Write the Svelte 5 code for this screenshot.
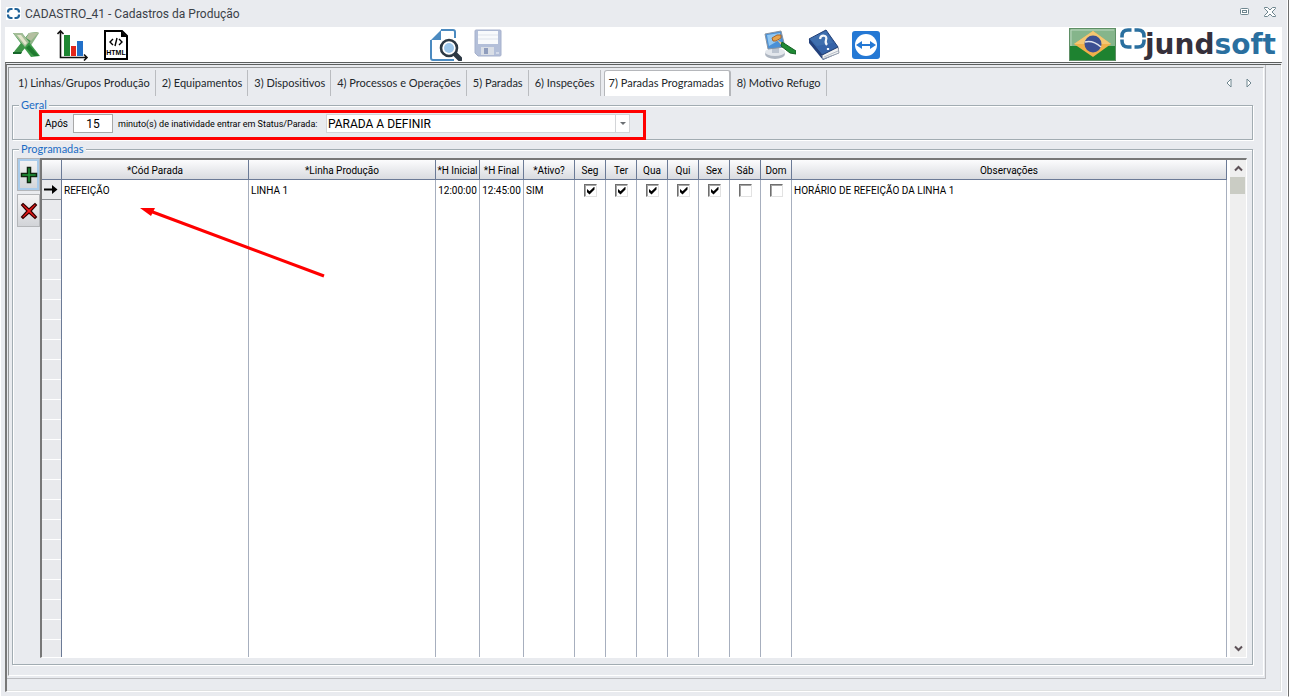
<script lang="ts">
  const tabs = [
    '1) Linhas/Grupos Produção',
    '2) Equipamentos',
    '3) Dispositivos',
    '4) Processos e Operações',
    '5) Paradas',
    '6) Inspeções',
    '7) Paradas Programadas',
    '8) Motivo Refugo'
  ];
  const days = ['Seg', 'Ter', 'Qua', 'Qui', 'Sex', 'Sáb', 'Dom'];

  let activeTab = $state(6);
  let minutes = $state('15');
  let status = $state('PARADA A DEFINIR');

  let rows = $state([
    {
      stop: 'REFEIÇÃO',
      line: 'LINHA 1',
      start: '12:00:00',
      end: '12:45:00',
      active: 'SIM',
      days: [true, true, true, true, true, false, false],
      notes: 'HORÁRIO DE REFEIÇÃO DA LINHA 1'
    }
  ]);
</script>

<div class="window">
  <header class="titlebar">
    <svg class="app-icon" width="15" height="13" viewBox="0 0 15 13">
      <rect width="15" height="13" fill="#fff" />
      <path d="M6.500 2H5Q2 2 2 5v.5M8.500 2H10q3 0 3 3v.5M6.500 11H5Q2 11 2 8v-.5M8.500 11H10q3 0 3-3v-.5" fill="none" stroke="#1f6298" stroke-width="2.200" />
    </svg>
    <h1>CADASTRO_41 - Cadastros da Produção</h1>
    <button class="win-btn" aria-label="Restaurar">
      <svg width="10" height="8" viewBox="0 0 10 8" fill="#fff" stroke="#6f868f">
        <rect x=".5" y=".5" width="8" height="6" rx="1" />
        <rect x="2.500" y="2.500" width="4" height="2" />
      </svg>
    </button>
    <button class="win-btn" aria-label="Fechar">
      <svg width="12" height="10" viewBox="0 0 12 10" fill="#fff" stroke="#6f868f">
        <path d="M.5.5h3L6 3 8.500.5h3v1L8 5l3.500 3.500v1h-3L6 7 3.500 9.500h-3v-1L4 5 .5 1.500z" />
      </svg>
    </button>
  </header>

  <div class="toolbar">
    <div class="tools">
      <button class="tool" aria-label="Exportar para Excel">
        <svg width="30" height="28" viewBox="0 0 30 28">
          <path d="M16 12 21 2h6L18 16z" fill="#8db487" />
          <path d="M1 22 17 2l9-1L9 22z" fill="#3f9448" />
          <path d="M17 2l10-1-8 9-5-3z" fill="#b4bfa0" />
          <path d="M1 2h9l18 23-9 1z" fill="#3c9b49" />
          <path d="M1 2h9l7 9-4 5z" fill="#a4bd98" />
          <path d="M5 4h4l6 8-2 2z" fill="#e4e6cc" />
          <path d="M14 17l8 8h5L17 14z" fill="#1f7a2f" />
          <path d="M1 21h9l-1 2H1z" fill="#17672a" />
        </svg>
      </button>
      <button class="tool" aria-label="Gráfico">
        <svg width="32" height="32" viewBox="0 0 32 32">
          <rect x="7" y="6" width="6" height="21" fill="#1e8733" />
          <rect x="14" y="17" width="5" height="10" fill="#e3261b" />
          <rect x="20" y="12" width="6" height="15" fill="#2170c9" />
          <path d="M3.500 2v26.500H29M.5 5l3-3 3 3M27 25.500l3 3-3 3" fill="none" stroke="#111" stroke-width="1.600" />
        </svg>
      </button>
      <button class="tool" aria-label="Exportar HTML">
        <svg width="24" height="30" viewBox="0 0 24 30">
          <path d="M1 1h17l5 5v23H1z" fill="#fff" stroke="#000" stroke-width="2" />
          <path d="M17 1v6h6z" />
          <path d="M9 9l-3 3 3 3M15 9l3 3-3 3M13 8l-2 8" fill="none" stroke="#000" stroke-width="1.400" />
          <text x="12" y="25" text-anchor="middle" class="html-label">HTML</text>
        </svg>
      </button>
    </div>

    <div class="tools tools-record">
      <button class="tool" aria-label="Visualizar">
        <svg width="32" height="32" viewBox="0 0 32 32">
          <path d="M1 11 11 1v10z" fill="#4b8ac0" />
          <path d="M11 1h12q2 0 2 2v6M1 11v18q0 2 2 2h21" fill="none" stroke="#4b8ac0" stroke-width="2" />
          <path d="M25 25l5 5" stroke="#2d3944" stroke-width="5" stroke-linecap="round" />
          <circle cx="19" cy="19" r="8" fill="#fff" stroke="#2d3944" stroke-width="2.600" />
          <circle cx="19" cy="19" r="5" fill="#9cc6ea" />
        </svg>
      </button>
      <button class="tool save" aria-label="Salvar" disabled>
        <svg width="28" height="28" viewBox="0 0 28 28">
          <path d="M1 2q0-1 1-1h24q1 0 1 1v24q0 1-1 1H4l-3-3z" fill="#b3bfd9" stroke="#a6b1cc" />
          <path d="M4 2h20v13H4z" fill="#f8fafc" />
          <path d="M4 6h20M4 10h20" stroke="#dfe4ec" />
          <path d="M7 18h13v8H7z" fill="#d9dee6" />
          <path d="M10 19h4v6h-4z" fill="#8f9dbd" />
          <path d="M22 24h3" stroke="#f2f4f8" />
        </svg>
      </button>
    </div>

    <div class="tools tools-help">
      <button class="tool" aria-label="Aparência">
        <svg width="32" height="30" viewBox="0 0 32 30">
          <ellipse cx="11" cy="24" rx="10" ry="5" fill="#aeb6c1" />
          <ellipse cx="11" cy="22" rx="10" ry="4" fill="#e3e7ec" />
          <path d="M8 17h7v6H8z" fill="#bdc5d0" />
          <path d="M1 4 17 1l4 16-17 2z" fill="#4a90d6" stroke="#8794a3" />
          <path d="M3 5 16 3l1 6-12 7z" fill="#91c7f2" />
          <path d="M8 8l5-3h4v3l-5 3H9z" fill="#e8a34b" stroke="#a6652a" />
          <path d="M13 10l6 3-1 3z" fill="#e4c28a" />
          <path d="M18 12l14 9v3l-6-1-9-7z" fill="#1f8a34" stroke="#146024" />
        </svg>
      </button>
      <button class="tool" aria-label="Ajuda">
        <svg width="32" height="32" viewBox="0 0 32 32">
          <path d="M1 10v4l14 17 16-7v-5z" fill="#22407c" />
          <path d="M14 26l16-8 1 6-16 6z" fill="#f2f3f4" stroke="#9aa3b0" />
          <path d="M16 28l14-6" stroke="#b5bcc6" />
          <path d="M1 10 18 1l12 17-16 8z" fill="#3563a8" stroke="#223f75" />
          <path d="M2 10 18 2l7 12-16 3z" fill="#3f6fae" />
          <path d="M12 10c1-5 8-4 6 1-1 3 0 4 1 5M20 19v2" fill="none" stroke="#f4f7fa" stroke-width="2.200" />
        </svg>
      </button>
      <button class="tool" aria-label="Suporte remoto">
        <svg width="28" height="28" viewBox="0 0 28 28">
          <rect width="28" height="28" rx="3" fill="#2478d4" />
          <circle cx="14" cy="14" r="11" fill="#fff" />
          <path d="M4 14l6-4v3h8v-3l6 4-6 4v-3h-8v3z" fill="#2478d4" />
        </svg>
      </button>
    </div>

    <div class="brand">
      <svg width="47" height="33" viewBox="0 0 47 33">
        <rect x=".5" y=".5" width="46" height="32" fill="#1e8230" stroke="#5f8f66" />
        <rect x="1" y="1" width="45" height="17" fill="#85b58b" />
        <path d="M2 18v-16h43" fill="none" stroke="#bcd8bf" />
        <path d="M5 16 24 3l18 13-18 13z" fill="#f0b04a" />
        <path d="M5 16 24 3l18 13z" fill="#f4c672" />
        <circle cx="24" cy="16" r="8.500" fill="#3c4f92" />
        <path d="M16 14q8-2 16 5" fill="none" stroke="#dfe3ee" stroke-width="1.600" />
      </svg>
      <svg class="mark" width="26" height="21" viewBox="0 0 26 21">
        <path d="M11.500 2H8Q2 2 2 8v1.500M14.500 2H18q6 0 6 6v1.500M11.500 19H8q-6 0-6-6v-1.500M14.500 19H18q6 0 6-6v-1.500" fill="none" stroke="#2a6f9f" stroke-width="3.600" />
      </svg>
      <span class="wordmark">jund<b>soft</b></span>
    </div>
  </div>

  <main class="pane">
    <div class="page">
      <div class="sheet">
        <nav class="tabs" role="tablist">
          {#each tabs as tab, i}
            <button role="tab" class="tab" class:active={activeTab === i} aria-selected={activeTab === i} onclick={() => (activeTab = i)}>{tab}</button>
          {/each}
          <div class="tab-scroll">
            <button aria-label="Abas anteriores">
              <svg width="6" height="10" viewBox="0 0 6 10"><path d="M5 1v8L1 5z" fill="#fff" stroke="#6f868f" /></svg>
            </button>
            <button aria-label="Próximas abas">
              <svg width="6" height="10" viewBox="0 0 6 10"><path d="M1 1v8l4-4z" fill="#fff" stroke="#6f868f" /></svg>
            </button>
          </div>
        </nav>

        <fieldset class="general">
          <legend>Geral</legend>
          <div class="idle">
            <label for="minutes">Após</label>
            <input id="minutes" type="text" bind:value={minutes} />
            <label for="status" class="small">minuto(s) de inatividade entrar em Status/Parada:</label>
            <div class="combo">
              <select id="status" bind:value={status}>
                <option>PARADA A DEFINIR</option>
              </select>
              <span class="combo-arrow"></span>
            </div>
          </div>
        </fieldset>

        <fieldset class="scheduled">
          <legend>Programadas</legend>
          <div class="row-actions">
            <button class="focused" aria-label="Adicionar">
              <svg width="18" height="18" viewBox="0 0 18 18"><path d="M7.500 1.500h3v6h6v3h-6v6h-3v-6h-6v-3h6z" fill="#1f9a3a" stroke="#10240f" stroke-width="1.500" /></svg>
            </button>
            <button aria-label="Excluir">
              <svg width="18" height="18" viewBox="0 0 18 18"><path d="M3 1.500l6 5.500 6-5.500 1.500 1.500L11 9l5.500 6-1.500 1.500L9 11l-6 5.500L1.500 15 7 9 1.500 3z" fill="#f01818" stroke="#300" stroke-width="1.200" /></svg>
            </button>
          </div>

          <div class="grid">
            <table>
              <colgroup>
                <col class="c-mark" />
                <col class="c-name" />
                <col class="c-name" />
                <col class="c-time" />
                <col class="c-time" />
                <col class="c-active" />
                {#each days as day}
                  <col class="c-day" />
                {/each}
                <col />
              </colgroup>
              <thead>
                <tr>
                  <th></th>
                  <th>*Cód Parada</th>
                  <th>*Linha Produção</th>
                  <th>*H Inicial</th>
                  <th>*H Final</th>
                  <th>*Ativo?</th>
                  {#each days as day}
                    <th>{day}</th>
                  {/each}
                  <th>Observações</th>
                </tr>
              </thead>
              <tbody>
                {#each rows as row}
                  <tr>
                    <td class="mark-cell">
                      <svg width="14" height="9" viewBox="0 0 14 9"><path d="M0 3.500h8V0l5.500 4.500L8 9V5.500H0z" /></svg>
                    </td>
                    <td>{row.stop}</td>
                    <td>{row.line}</td>
                    <td class="center">{row.start}</td>
                    <td class="center">{row.end}</td>
                    <td>{row.active}</td>
                    {#each days as day, d}
                      <td class="center"><input type="checkbox" aria-label={day} bind:checked={row.days[d]} /></td>
                    {/each}
                    <td>{row.notes}</td>
                  </tr>
                {/each}
                <tr class="filler">
                  <td class="blank-marks"></td>
                  {#each Array(13) as _}
                    <td></td>
                  {/each}
                </tr>
              </tbody>
            </table>
            <div class="scrollbar">
              <button aria-label="Rolar para cima">
                <svg width="9" height="7" viewBox="0 0 9 7"><path d="M1 5.500 4.500 2 8 5.500" /></svg>
              </button>
              <div class="thumb"></div>
              <button class="down" aria-label="Rolar para baixo">
                <svg width="9" height="7" viewBox="0 0 9 7"><path d="M1 1.500 4.500 5 8 1.500" /></svg>
              </button>
            </div>
            <svg class="pointer" width="186" height="72" viewBox="0 0 186 72">
              <path d="M10 4 184 69" stroke="#f00" stroke-width="3" />
              <path d="M0 1l15 0-4 8z" fill="#f00" />
            </svg>
          </div>
        </fieldset>
      </div>
    </div>
  </main>
</div>

<style>
  :global(body) {
    margin: 0;
  }

  .window {
    box-sizing: border-box;
    display: flex;
    flex-direction: column;
    height: 100vh;
    padding: 0 6px 4px 4px;
    background: #e9ebef;
    border-left: 1px solid #fff;
    border-right: 1px solid #6d6d6d;
    border-bottom: 1px solid #fff;
    box-shadow: inset -1px 0 0 #fff;
    font-family: Roboto, sans-serif;
    font-size: 10px;
    color: #000;
  }

  button {
    padding: 0;
    border: none;
    background: none;
    font: inherit;
    color: inherit;
  }

  svg {
    display: block;
    flex: none;
  }

  .titlebar {
    display: flex;
    align-items: center;
    height: 27px;
    padding: 0 6px 0 1px;
    gap: 14px;
  }

  .titlebar h1 {
    flex: 1;
    margin: 0 0 0 -10px;
    font: 12px Roboto, sans-serif;
    color: #3b4148;
  }

  .win-btn {
    margin-bottom: 3px;
  }

  .toolbar {
    display: flex;
    align-items: center;
    height: 35px;
    padding: 0 6px 0 7px;
    background: #fff;
  }

  .tools {
    display: flex;
    align-items: center;
    gap: 15px;
  }

  .tools-record {
    gap: 12px;
    margin-left: 302px;
  }

  .save {
    margin-bottom: 3px;
  }

  .tools-help {
    gap: 12px;
    margin-left: 262px;
  }

  .html-label {
    font: bold 7px 'Liberation Sans', sans-serif;
  }

  .brand {
    display: flex;
    align-items: center;
    margin-left: auto;
  }

  .mark {
    margin: 0 0 12px 4px;
  }

  .wordmark {
    margin-left: -1px;
    font: bold 28px/33px 'DejaVu Sans', sans-serif;
    color: #35303b;
  }

  .wordmark b {
    color: #2a6f9f;
  }

  .pane {
    flex: 1;
    display: flex;
    min-height: 0;
    border-top: 3px double #5c5f5e;
    border-left: 2px solid #777;
    border-right: 1px solid #fff;
    border-bottom: 1px solid #fff;
    box-shadow: inset -1px -1px 0 #dfe1e1;
  }

  .page {
    flex: 1;
    display: flex;
    margin: 0 15px 12px 0;
    padding: 2px 1px 2px 1px;
    border-right: 1px solid #bcbdc1;
    border-bottom: 1px solid #bcbdc1;
  }

  .sheet {
    flex: 1;
    display: flex;
    flex-direction: column;
    padding: 2px 10px 10px 3px;
    border: 1px solid #969899;
    border-right-color: #fff;
    border-bottom-color: #fff;
  }

  .tabs {
    display: flex;
    height: 26px;
    font: 11px Lato, sans-serif;
    color: #22272b;
  }

  .tab {
    padding: 0 5px 2px 6px;
    border-right: 1px solid #babcc0;
    white-space: nowrap;
  }

  .tab.active {
    margin-left: 3px;
    padding: 0 5px 2px 4px;
    background: #fff;
    border: 1px solid #b5b7bb;
    border-right-width: 2px;
    border-bottom: none;
    border-radius: 3px 3px 0 0;
  }

  .tab-scroll {
    display: flex;
    gap: 14px;
    margin-left: auto;
    padding-right: 1px;
  }

  fieldset {
    position: relative;
    min-width: 0;
    margin: 0;
    padding: 0;
    border: 1px solid #a2acb2;
    box-shadow: 1px 1px 0 #fff, inset 1px 1px 0 #fff;
  }

  /* Sits on the frame line */
  legend {
    position: absolute;
    top: -9px;
    left: 6px;
    padding: 0 2px;
    background: #e9ebef;
    font: 11px/15px Lato, sans-serif;
    color: #1b6bc4;
  }

  .general {
    margin-top: 9px;
    padding: 4px 0 0 26px;
  }

  .idle {
    position: relative;
    box-sizing: border-box;
    display: flex;
    align-items: center;
    width: 607px;
    height: 30px;
    margin-bottom: -1px;
    padding: 0 0 3px 3px;
    border: 3px solid #f00;
  }

  .idle label {
    white-space: nowrap;
  }

  .idle .small {
    font-size: 9px;
  }

  .idle input {
    box-sizing: border-box;
    width: 40px;
    height: 19px;
    margin: 0 5px;
    padding: 0;
    border: 1px solid #a8a8a8;
    background: #fff;
    font: 12px Roboto, sans-serif;
    text-align: center;
  }

  .combo {
    position: relative;
    flex: none;
    width: 304px;
    margin-left: auto;
    margin-right: 13px;
  }

  .combo select {
    display: block;
    width: 100%;
    height: 19px;
    padding: 0 16px 0 1px;
    appearance: none;
    border: 1px solid #d3d5d8;
    border-radius: 0;
    background: #fff;
    font: 12px Roboto, sans-serif;
    color: #000;
  }

  .combo-arrow {
    position: absolute;
    top: 1px;
    right: 1px;
    width: 13px;
    height: 17px;
    border-left: 1px solid #d3d5d8;
    pointer-events: none;
  }

  .combo-arrow::after {
    content: '';
    position: absolute;
    top: 7px;
    left: 4px;
    border: 3px solid transparent;
    border-top-color: #6b6f73;
    border-bottom: none;
  }

  .scheduled {
    flex: 1;
    display: flex;
    min-height: 0;
    margin-top: 9px;
    padding: 8px 5px 6px 4px;
  }

  .row-actions {
    display: flex;
    flex-direction: column;
    gap: 3px;
  }

  .row-actions button {
    display: flex;
    align-items: center;
    justify-content: center;
    box-sizing: border-box;
    width: 23px;
    height: 33px;
    border: 1px solid #b4b6b9;
    background: linear-gradient(#f4f4f5, #d2d4d8);
  }

  .row-actions .focused {
    box-shadow: inset 0 0 0 2px #a9cbea;
  }

  .grid {
    position: relative;
    flex: 1;
    display: flex;
    min-width: 0;
    border-top: 2px solid #777;
    border-left: 2px solid #777;
    border-right: 1px solid #fff;
    border-bottom: 1px solid #fff;
    background: #fff;
  }

  table {
    flex: 1;
    width: 100%;
    height: 100%;
    table-layout: fixed;
    border-collapse: separate;
    border-spacing: 0;
  }

  .c-mark {
    width: 20px;
  }

  .c-name {
    width: 187px;
  }

  .c-time {
    width: 44px;
  }

  .c-active {
    width: 51px;
  }

  .c-day {
    width: 31px;
  }

  th {
    box-sizing: border-box;
    height: 20px;
    padding: 1px 0 0;
    border-right: 1px solid #6b7a96;
    border-bottom: 1px solid #6b7a96;
    background: linear-gradient(#fcfcfd, #d9dbe0);
    font-weight: normal;
    white-space: nowrap;
  }

  td {
    box-sizing: border-box;
    height: 20px;
    padding: 0 2px;
    border-right: 1px solid #a7afbe;
    white-space: nowrap;
  }

  td:first-child {
    border-right-color: #6b7a96;
  }

  .center {
    padding: 0;
    text-align: center;
  }

  .mark-cell {
    background: #e9eaec;
    border-bottom: 1px solid #8c8f94;
  }

  .filler td {
    height: auto;
  }

  .blank-marks {
    background: linear-gradient(#e9eaed 19px, #fff 19px) 0 0 / 100% 20px;
  }

  td input {
    display: block;
    position: relative;
    box-sizing: border-box;
    width: 13px;
    height: 13px;
    margin: 0 auto;
    appearance: none;
    background: #fff;
    border: 1px solid #e2e2e2;
    border-top-color: #6f6f6f;
    border-left-color: #6f6f6f;
    box-shadow: inset 1px 1px 0 #a5a5a5;
  }

  td input:checked::before {
    content: '';
    position: absolute;
    inset: 2px 1px 1px 2px;
    background: #000;
    clip-path: polygon(0 25%, 38% 58%, 100% 0, 100% 38%, 38% 100%, 0 65%);
  }

  .scrollbar {
    flex: none;
    display: flex;
    flex-direction: column;
    width: 16px;
    margin-left: 3px;
    background: #efefef;
  }

  .scrollbar button {
    display: flex;
    align-items: center;
    justify-content: center;
    height: 17px;
  }

  .scrollbar path {
    fill: none;
    stroke: #5d5157;
    stroke-width: 2;
  }

  .thumb {
    width: 15px;
    height: 17px;
    background: #caccc4;
  }

  .scrollbar .down {
    margin-top: auto;
  }

  .pointer {
    position: absolute;
    top: 47px;
    left: 98px;
    pointer-events: none;
  }
</style>
